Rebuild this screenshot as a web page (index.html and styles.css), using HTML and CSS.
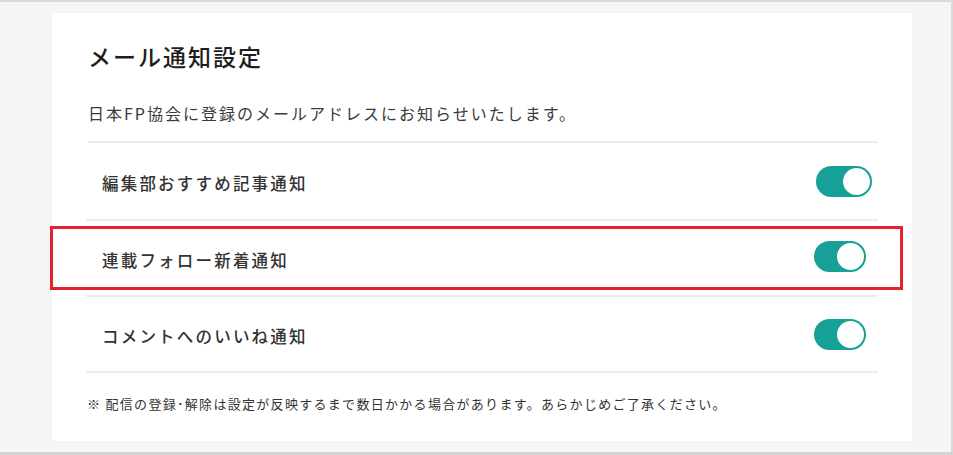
FILE: index.html
```html
<!DOCTYPE html>
<html lang="ja">
<head>
    <meta charset="UTF-8">
    <meta name="viewport" content="width=device-width, initial-scale=1.0">
    <title>メール通知設定</title>
    <link rel="stylesheet" href="styles.css">
</head>
<body>
    <div class="screen">
        <!-- Settings card -->
        <div class="card">
            <h2 class="card-title">メール通知設定</h2>
            <p class="card-desc">日本FP協会に登録のメールアドレスにお知らせいたします。</p>

            <ul class="setting-list">
                <li class="setting-row first">
                    <span class="setting-label">編集部おすすめ記事通知</span>
                    <span class="toggle is-on"><span class="knob"></span></span>
                </li>
                <li class="setting-row is-marked">
                    <span class="setting-label">連載フォロー新着通知</span>
                    <span class="toggle is-on small"><span class="knob"></span></span>
                    <span class="mark-box"></span>
                </li>
                <li class="setting-row">
                    <span class="setting-label">コメントへのいいね通知</span>
                    <span class="toggle is-on small"><span class="knob"></span></span>
                </li>
            </ul>

            <p class="note">※ 配信の登録･解除は設定が反映するまで数日かかる場合があります。あらかじめご了承ください。</p>
        </div>
    </div>
</body>
</html>
```

FILE: styles.css
```css
* {
    box-sizing: border-box;
}
body {
    margin: 0;
    padding: 0;
    font-family: "Noto Sans CJK JP", "Noto Sans", sans-serif;
    color: #333;
}
.screen {
    width: 953px;
    height: 455px;
    background-color: #f4f6f6;
    border-top: 2px solid #d8dada;
    border-right: 2px solid #d8dada;
    border-bottom: 3px solid #d3d5d5;
    padding: 11px 0 0 52px;
}
.card {
    width: 860px;
    height: 428px;
    background-color: #fff;
    padding: 25px 34px 0 34px;
}
.card-title {
    margin: 0 0 0 2px;
    font-size: 23px;
    font-weight: 500;
    letter-spacing: 2px;
    line-height: 36px;
    color: #1e1e1e;
}
.card-desc {
    margin: 26px 0 0 2px;
    font-size: 16px;
    letter-spacing: 2px;
    line-height: 26px;
    color: #3a3a3a;
    padding-bottom: 15px;
    border-bottom: 2px solid #ececec;
}
.setting-list {
    list-style: none;
    margin: 0;
    padding: 0;
}
.setting-row {
    position: relative;
    display: flex;
    align-items: center;
    justify-content: space-between;
    height: 76px;
    padding: 0 6px 0 16px;
    border-bottom: 2px solid #ececec;
}
.setting-row.first {
    height: 78px;
}
.setting-label {
    font-size: 16.5px;
    font-weight: 500;
    letter-spacing: 2.2px;
    color: #333;
    padding-top: 4px;
}
.toggle {
    position: relative;
    width: 56px;
    height: 31px;
    border-radius: 16px;
    background-color: #ccc;
}
.toggle.is-on {
    background-color: #16a098;
}
.toggle.small {
    width: 52px;
    margin-right: 6px;
}
.knob {
    position: absolute;
    top: 2px;
    right: 2px;
    width: 27px;
    height: 27px;
    border-radius: 50%;
    background-color: #fff;
}
.is-marked .toggle {
    margin-top: -4px;
}
.mark-box {
    position: absolute;
    top: 5px;
    bottom: 5px;
    left: -36px;
    right: -25px;
    border: 3px solid #e3222b;
    pointer-events: none;
}
.note {
    margin: 21px 0 0 1px;
    font-size: 13px;
    letter-spacing: 1.3px;
    line-height: 20px;
    color: #333;
}
```
